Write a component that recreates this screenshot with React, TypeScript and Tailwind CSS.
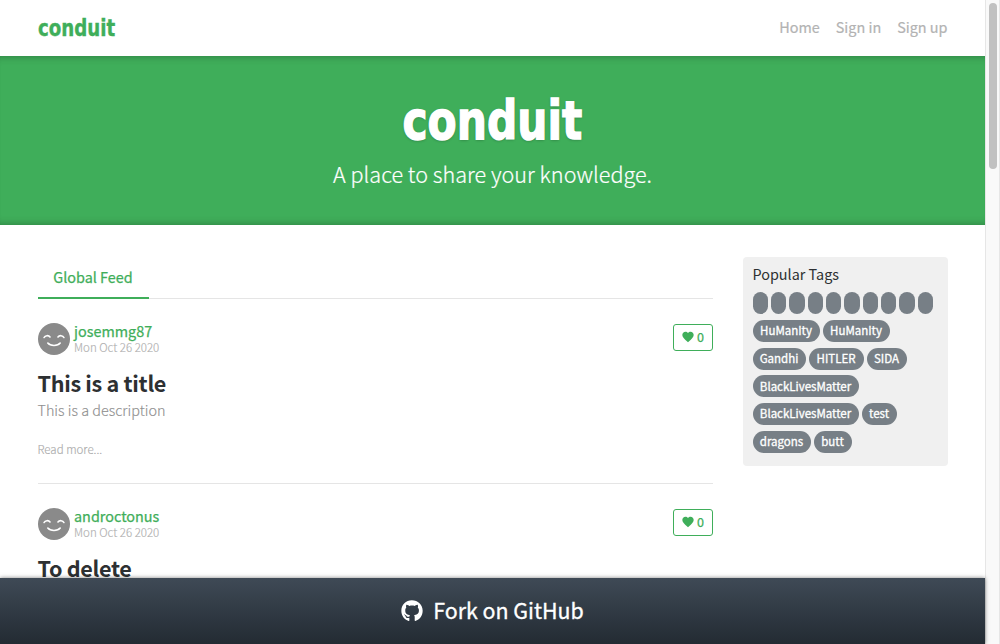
import React from "react";
import { FaGithub } from "react-icons/fa";
import { IoMdHeart } from "react-icons/io";

type Tag = { label: string; width: number };

const tagRows: Tag[][] = [
  [15, 15, 16, 15, 15, 16, 15, 15, 16, 15].map((width) => ({ label: "", width })),
  [{ label: "HuManIty", width: 67 }, { label: "HuManIty", width: 67 }],
  [{ label: "Gandhi", width: 53 }, { label: "HITLER", width: 55 }, { label: "SIDA", width: 40 }],
  [{ label: "BlackLivesMatter", width: 106 }],
  [{ label: "BlackLivesMatter", width: 106 }, { label: "test", width: 35 }],
  [{ label: "dragons", width: 58 }, { label: "butt", width: 38 }],
];

const date = "Mon Oct 26 2020";

const articles = [
  { author: "josemmg87", title: "This is a title", description: "This is a description" },
  { author: "androctonus", title: "To delete", description: "To delete" },
];

function Avatar() {
  return (
    <svg viewBox="0 0 32 32" className="size-8 shrink-0">
      <circle cx="16" cy="16" r="16" fill="#8a8a8a" />
      <g fill="none" stroke="#fff" strokeWidth="1.6" strokeLinecap="round">
        <path d="M6.1 14.5C7.1 12.3 10.6 12 12 14" />
        <path d="M20 14C21.4 12 24.9 12.3 25.9 14.5" />
        <path d="M9.8 20.1C12.4 23.3 19.6 23.3 22.2 20.1" />
      </g>
    </svg>
  );
}

function Article({ author, title, description }: (typeof articles)[number]) {
  return (
    <article className="h-[185px] border-t border-[#e5e5e5] pt-6">
      <div className="flex h-8">
        <Avatar />
        <div className="ml-[4.5px] grow">
          <div className="h-4 text-[14.4px] leading-[15px] text-[#3fae5a] [-webkit-text-stroke:0.25px]">{author}</div>
          <div className="h-4 text-[11.5px] font-light leading-4 text-[#b0b0b0] [-webkit-text-stroke:0.15px]">{date}</div>
        </div>
        <button className="mt-px flex h-[27px] w-10 items-center justify-center gap-[2px] rounded-[3px] border border-[#3fae5a] text-[12.6px] text-[#3fae5a]">
          <IoMdHeart className="mb-px size-[14px]" />
          <span className="mb-[2px] leading-6 [-webkit-text-stroke:0.25px]">0</span>
        </button>
      </div>
      <h2 className="mt-[15px] h-7 text-[21.6px] font-bold leading-[26px] tracking-[-0.32px] text-[#2d3032]">{title}</h2>
      <p className="h-[41px] text-[14.4px] font-light leading-6 text-[#8f8f8f] [-webkit-text-stroke:0.15px]">{description}</p>
      <span className="block text-[11.5px] font-light leading-5 text-[#ababab] [-webkit-text-stroke:0.15px]">Read more...</span>
    </article>
  );
}

export default function App() {
  return (
    <div className="relative flex h-[644px] w-[1000px] overflow-hidden bg-white font-['Noto_Sans_CJK_SC','Noto_Sans',sans-serif] text-[14.4px]">
      <div className="w-[985px]">
        <nav className="flex h-14 items-center justify-between px-[37.5px]">
          <span className="origin-left scale-x-[0.81] font-['DejaVu_Sans',sans-serif] text-[22.5px] font-bold leading-8 text-[#3fae5a] [-webkit-text-stroke:0.4px]">conduit</span>
          <div className="mb-[2px] flex gap-4 leading-6 text-[#b3b3b3] [-webkit-text-stroke:0.2px]">
            <span>Home</span>
            <span>Sign in</span>
            <span>Sign up</span>
          </div>
        </nav>
        <header className="flex h-[169px] flex-col items-center bg-[#3fae5a] pt-8 text-white shadow-[inset_0_8px_8px_-8px_rgba(0,0,0,0.3),inset_0_-8px_8px_-8px_rgba(0,0,0,0.3)]">
          <h1 className="h-[68px] scale-x-[0.8] font-['DejaVu_Sans',sans-serif] text-[53px] font-bold leading-[66px] [-webkit-text-stroke:1.4px] [text-shadow:0_1px_3px_rgba(0,0,0,0.3)]">conduit</h1>
          <p className="text-[21.6px] font-light leading-9 [-webkit-text-stroke:0.2px]">A place to share your knowledge.</p>
        </header>
        <div className="flex items-start gap-[30px] px-[37.5px] pt-8">
          <main className="w-[675px]">
            <div className="mb-[-1px] flex h-[42px]">
              <span className="relative w-[111px] border-b-2 border-[#3fae5a] py-2 text-center leading-6 text-[#3fae5a] [-webkit-text-stroke:0.25px]">Global Feed</span>
            </div>
            {articles.map((article) => (
              <Article key={article.author} {...article} />
            ))}
          </main>
          <aside className="flex h-[209px] w-[205px] flex-col rounded bg-[#f0f0f0] px-[10px] pt-[5px] text-[#2d3032]">
            <p className="h-[30px] leading-6">Popular Tags</p>
            <div className="flex flex-col gap-[5.7px]">
              {tagRows.map((row, i) => (
                <div key={i} className="flex gap-[3px]">
                  {row.map((tag, j) => (
                    <span
                      key={j}
                      className="flex h-[22.1px] items-center justify-center whitespace-nowrap rounded-full bg-[#777f86] pb-[1.5px] text-[11.5px] leading-5 text-white [-webkit-text-stroke:0.3px]"
                      style={{ width: tag.width }}
                    >
                      {tag.label}
                    </span>
                  ))}
                </div>
              ))}
            </div>
          </aside>
        </div>
      </div>
      <div className="w-[15px] border-x border-[#e6e6e6] bg-[#f9f9f9] pl-[3px] pt-[3px]">
        <div className="h-[166px] w-2 rounded-full bg-[#c1c1c1]" />
      </div>
      <footer className="absolute bottom-0 left-0 flex h-[66px] w-[985px] items-center justify-center gap-[10px] bg-linear-to-b from-[#3f4a56] to-[#232b33] text-[21.4px] text-white shadow-[0_0_4px_rgba(0,0,0,0.5)]">
        <FaGithub className="mb-px size-[22px]" />
        <span className="mb-[2px] leading-9 [-webkit-text-stroke:0.3px]">Fork on GitHub</span>
      </footer>
    </div>
  );
}
